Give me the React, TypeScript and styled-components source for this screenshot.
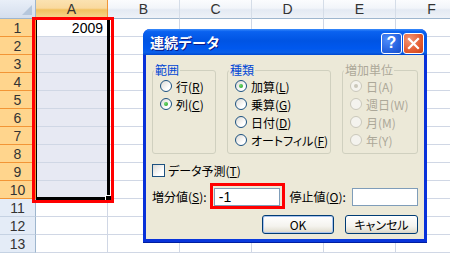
import styled, { createGlobalStyle, css } from 'styled-components';

const GlobalStyle = createGlobalStyle`
  html, body {
    margin: 0;
    padding: 0;
    background: #fff;
  }
  body {
    width: 450px;
    height: 253px;
    overflow: hidden;
    font-family: "Liberation Sans", "Noto Sans CJK JP", sans-serif;
  }
`;

const JP = `"Noto Sans CJK JP", "Liberation Sans", sans-serif`;

const COLUMNS = ['A', 'B', 'C', 'D', 'E', 'F'];
const ROW_COUNT = 13;
const SELECTED_ROWS = 10;

const App = () => {
    const rows = Array.from({ length: ROW_COUNT }, (_, i) => i + 1);

    return (
        <>
        <GlobalStyle />
        <Page>
            <Sheet>
                <Corner />
                {COLUMNS.map(c => (
                    <ColHeader key={c} $selected={c === 'A'}>{c}</ColHeader>
                ))}
                {rows.map(r => (
                    <Row key={r}>
                        <RowHeader $selected={r <= SELECTED_ROWS}>{r}</RowHeader>
                        {COLUMNS.map(c => (
                            <Cell
                                key={c}
                                $selected={c === 'A' && r > 1 && r <= SELECTED_ROWS}
                            >
                                {c === 'A' && r === 1 ? '2009' : ''}
                            </Cell>
                        ))}
                    </Row>
                ))}
            </Sheet>

            <Selection>
                <FillHandle />
            </Selection>
            <Callout $left={32} $top={17} $width={82} $height={186} />

            <Dialog>
                <TitleBar>
                    <Title>連続データ</Title>
                    <TitleButtons>
                        <HelpButton>?</HelpButton>
                        <CloseButton>
                            <svg width="13" height="13" viewBox="0 0 13 13">
                                <path d="M2 2 L11 11 M11 2 L2 11" stroke="#fff" strokeWidth="2.2" strokeLinecap="square" />
                            </svg>
                        </CloseButton>
                    </TitleButtons>
                </TitleBar>

                <Body>
                    <Groups>
                        <Group $width={64}>
                            <Legend>範囲</Legend>
                            <Option><Radio /><span>行(<u>R</u>)</span></Option>
                            <Option><Radio $checked /><span>列(<u>C</u>)</span></Option>
                        </Group>
                        <Group $width={104}>
                            <Legend>種類</Legend>
                            <Option><Radio $checked /><span>加算(<u>L</u>)</span></Option>
                            <Option><Radio /><span>乗算(<u>G</u>)</span></Option>
                            <Option><Radio /><span>日付(<u>D</u>)</span></Option>
                            <Option><Radio /><span>オートフィル(<u>F</u>)</span></Option>
                        </Group>
                        <Group $width={76}>
                            <Legend $disabled>増加単位</Legend>
                            <Option $disabled><Radio $checked $disabled /><span>日(A)</span></Option>
                            <Option $disabled><Radio $disabled /><span>週日(W)</span></Option>
                            <Option $disabled><Radio $disabled /><span>月(M)</span></Option>
                            <Option $disabled><Radio $disabled /><span>年(Y)</span></Option>
                        </Group>
                    </Groups>

                    <CheckRow>
                        <Checkbox />
                        <span>データ予測(<u>T</u>)</span>
                    </CheckRow>

                    <FieldRow>
                        <FieldLabel $width={62}>増分値(<u>S</u>):</FieldLabel>
                        <TextInput>-1</TextInput>
                        <FieldLabel $width={63} $gap={10}>停止値(<u>O</u>):</FieldLabel>
                        <TextInput />
                    </FieldRow>

                    <ButtonRow>
                        <Button $default $width={72}>OK</Button>
                        <Button $width={73}>キャンセル</Button>
                    </ButtonRow>
                </Body>
            </Dialog>

            <Callout $left={210} $top={183} $width={75} $height={26} />
        </Page>
        </>
    );
};

const Page = styled.div`
    position: relative;
    width: 450px;
    height: 253px;
    overflow: hidden;
    background: #fff;
`;

/* ---------- spreadsheet ---------- */

const Sheet = styled.div`
    display: grid;
    grid-template-columns: 36px repeat(6, 72px);
    grid-template-rows: 19px repeat(13, 18px);
`;

const Row = styled.div`
    display: contents;
`;

const headerText = css`
    display: flex;
    align-items: center;
    justify-content: center;
    box-sizing: border-box;
    font-family: "Liberation Sans", sans-serif;
    font-size: 14px;
    color: #333;
`;

const Corner = styled.div`
    position: relative;
    box-sizing: border-box;
    background: linear-gradient(#e9eff8, #d4deed);
    border-right: 1px solid #9eb6ce;
    border-bottom: 1px solid #9eb6ce;

    &::after {
        content: '';
        position: absolute;
        right: 3px;
        bottom: 3px;
        border-style: solid;
        border-width: 0 0 10px 10px;
        border-color: transparent transparent #b6c7dc transparent;
    }
`;

const ColHeader = styled.div<{ $selected?: boolean }>`
    ${headerText};
    background: ${p => p.$selected
        ? 'linear-gradient(#fbe2b1, #f9d99f 45%, #f1c15f 55%, #f7d58f)'
        : 'linear-gradient(#fbfcfe, #f2f5fa 45%, #e4eaf3 55%, #eef2f8)'};
    border-right: 1px solid ${p => p.$selected ? '#f29536' : '#d5dde8'};
    border-bottom: 1px solid ${p => p.$selected ? '#f29536' : '#9eb6ce'};
`;

const RowHeader = styled.div<{ $selected?: boolean }>`
    ${headerText};
    background: ${p => p.$selected ? '#ffd58d' : '#e4ecf7'};
    border-right: 1px solid ${p => p.$selected ? '#f29536' : '#9eb6ce'};
    border-bottom: 1px solid ${p => p.$selected ? '#f29536' : '#c5d2e3'};
`;

const Cell = styled.div<{ $selected?: boolean }>`
    box-sizing: border-box;
    display: flex;
    align-items: center;
    justify-content: flex-end;
    padding-right: 4px;
    font-family: "Liberation Sans", sans-serif;
    font-size: 14px;
    color: #000;
    background: ${p => p.$selected ? '#e7e9f3' : '#fff'};
    border-right: 1px solid #d0d7e5;
    border-bottom: 1px solid #d0d7e5;
`;

const Selection = styled.div`
    position: absolute;
    left: 36px;
    top: 19px;
    width: 74px;
    height: 181px;
    box-sizing: border-box;
    border-style: solid;
    border-color: #000;
    border-width: 1px 3px 3px 1px;
`;

const FillHandle = styled.div`
    position: absolute;
    right: -5px;
    bottom: -5px;
    width: 5px;
    height: 5px;
    background: #000;
    border: 1px solid #fff;
`;

const Callout = styled.div<{ $left: number; $top: number; $width: number; $height: number }>`
    position: absolute;
    left: ${p => p.$left}px;
    top: ${p => p.$top}px;
    width: ${p => p.$width}px;
    height: ${p => p.$height}px;
    box-sizing: border-box;
    border: 3px solid #ff0000;
    pointer-events: none;
`;

/* ---------- dialog ---------- */

const Dialog = styled.div`
    position: absolute;
    left: 143px;
    top: 29px;
    width: 284px;
    height: 214px;
    box-sizing: border-box;
    display: flex;
    flex-direction: column;
    padding: 0 3px 3px;
    background: linear-gradient(90deg, #0831d9, #0a3ee0 50%, #0831d9);
    border-radius: 7px 7px 0 0;
    border-bottom: 1px solid #001ea0;
`;

const TitleBar = styled.div`
    height: 26px;
    margin: 0 -3px;
    padding: 0 3px 0 7px;
    display: flex;
    align-items: center;
    justify-content: space-between;
    border-radius: 7px 7px 0 0;
    background: linear-gradient(#3a8cfb 0%, #0a62f0 10%, #0054e3 45%, #0058ee 75%, #0a5fe8 90%, #0048d0 100%);
`;

const Title = styled.span`
    font-family: ${JP};
    font-size: 14px;
    font-weight: bold;
    color: #fff;
    text-shadow: 1px 1px 0 #0a1883;
    line-height: 26px;
`;

const TitleButtons = styled.div`
    display: flex;
    gap: 1px;
    margin-top: 2px;
`;

const titleButton = css`
    width: 21px;
    height: 21px;
    box-sizing: border-box;
    display: flex;
    align-items: center;
    justify-content: center;
    border: 1px solid #fff;
    border-radius: 3px;
`;

const HelpButton = styled.div`
    ${titleButton};
    background: radial-gradient(circle at 30% 30%, #4f8dfb, #2663e0 60%, #1a4fc8);
    color: #fff;
    font-family: "Liberation Sans", sans-serif;
    font-weight: bold;
    font-size: 16px;
`;

const CloseButton = styled.div`
    ${titleButton};
    background: radial-gradient(circle at 30% 30%, #f39676, #e35b2f 60%, #c9431c);
`;

const Body = styled.div`
    flex: 1;
    display: flex;
    flex-direction: column;
    padding: 8px 6px 0;
    background: #ece9d8;
    font-family: ${JP};
    font-size: 12px;
    font-feature-settings: "palt";
    color: #000;
`;

const Groups = styled.div`
    display: flex;
    gap: 11px;
`;

const Group = styled.fieldset<{ $width: number }>`
    width: ${p => p.$width}px;
    height: 91px;
    box-sizing: border-box;
    margin: 0;
    padding: 0 0 0 7px;
    min-width: 0;
    border: 1px solid #d0d0bf;
    border-radius: 3px;
`;

const Legend = styled.legend<{ $disabled?: boolean }>`
    margin-left: -6px;
    padding: 0 1px;
    height: 14px;
    line-height: 14px;
    font-size: 12px;
    color: ${p => p.$disabled ? '#aca899' : '#0046d5'};
`;

const Option = styled.div<{ $disabled?: boolean }>`
    display: flex;
    align-items: center;
    gap: 4px;
    height: 18px;
    white-space: nowrap;
    color: ${p => p.$disabled ? '#aca899' : '#000'};
`;

const Radio = styled.span<{ $checked?: boolean; $disabled?: boolean }>`
    position: relative;
    flex: none;
    width: 12px;
    height: 12px;
    box-sizing: border-box;
    border-radius: 50%;
    border: 1px solid ${p => p.$disabled ? '#cac8bb' : '#1c5180'};
    background: ${p => p.$disabled ? '#f4f3ee' : 'linear-gradient(135deg, #dcdad5, #ffffff 70%)'};

    ${p => p.$checked && css`
        &::after {
            content: '';
            position: absolute;
            left: 3px;
            top: 3px;
            width: 4px;
            height: 4px;
            border-radius: 50%;
            background: ${p.$disabled ? '#cac8bb' : 'radial-gradient(circle at 35% 35%, #6fd66f, #21a121)'};
        }
    `}
`;

const CheckRow = styled.div`
    display: flex;
    align-items: center;
    gap: 3px;
    height: 18px;
    margin-top: 7px;
`;

const Checkbox = styled.span`
    flex: none;
    width: 13px;
    height: 13px;
    box-sizing: border-box;
    border: 1px solid #1c5180;
    background: linear-gradient(135deg, #dcdad5, #ffffff 70%);
`;

const FieldRow = styled.div`
    display: flex;
    align-items: center;
    height: 19px;
    margin-top: 8px;
`;

const FieldLabel = styled.span<{ $width: number; $gap?: number }>`
    width: ${p => p.$width}px;
    margin-left: ${p => p.$gap ?? 0}px;
    white-space: nowrap;
`;

const TextInput = styled.div`
    width: 66px;
    height: 18px;
    box-sizing: border-box;
    border: 1px solid #7f9db9;
    background: #fff;
    padding-left: 4px;
    font-family: "Liberation Sans", sans-serif;
    font-size: 14px;
    line-height: 16px;
`;

const ButtonRow = styled.div`
    display: flex;
    justify-content: flex-end;
    gap: 11px;
    margin-top: 9px;
`;

const Button = styled.div<{ $width: number; $default?: boolean }>`
    width: ${p => p.$width}px;
    height: 19px;
    box-sizing: border-box;
    display: flex;
    align-items: center;
    justify-content: center;
    border: 1px solid #003c74;
    border-radius: 3px;
    background: linear-gradient(#ffffff, #f4f3ee 60%, #e3e0d3 90%, #d6d0c5);
    box-shadow: ${p => p.$default ? 'inset 0 0 0 1px #a9c3ee' : 'none'};
    font-size: 12px;
`;

export default App;
